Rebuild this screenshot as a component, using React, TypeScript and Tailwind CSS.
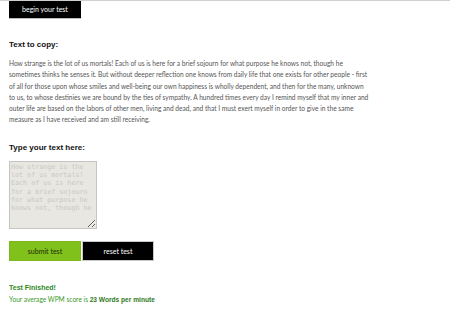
import { useState } from "react";

const LINES = [
  "How strange is the lot of us mortals! Each of us is here for a brief sojourn for what purpose he knows not, though he",
  "sometimes thinks he senses it. But without deeper reflection one knows from daily life that one exists for other people - first",
  "of all for those upon whose smiles and well-being our own happiness is wholly dependent, and then for the many, unknown",
  "to us, to whose destinies we are bound by the ties of sympathy. A hundred times every day I remind myself that my inner and",
  "outer life are based on the labors of other men, living and dead, and that I must exert myself in order to give in the same",
  "measure as I have received and am still receiving.",
];

export default function App() {
  const [typed, setTyped] = useState("");

  return (
    <div className="min-h-[330px] w-[450px] overflow-hidden border-t border-[#cfcfcf] bg-white font-['Lato',sans-serif]">
      <div className="px-[9px]">
        <button className="flex h-[18px] w-[72px] items-center justify-center border-b border-[#bbbbbb] bg-black text-[7px] text-white">
          begin your test
        </button>

        <h3 className="mt-[21px] font-['Liberation_Sans',Arial,sans-serif] text-[8px] font-bold leading-[10px] text-[#111]">
          Text to copy:
        </h3>

        <p className="mt-[8px] whitespace-nowrap text-[6.6px] leading-[11.3px] text-[#555]">
          {LINES.map((l, i) => (
            <span key={i} className="block">
              {l}
            </span>
          ))}
        </p>

        <h3 className="mt-[17px] font-['Liberation_Sans',Arial,sans-serif] text-[8px] font-bold leading-[10px] text-[#111]">
          Type your text here:
        </h3>

        <textarea
          value={typed}
          onChange={(e) => setTyped(e.target.value)}
          placeholder={LINES[0]}
          className="mt-[8px] block h-[68px] w-[88px] resize-y overflow-hidden border border-[#c4c4c4] bg-[#e8e7e1] px-[1px] py-[1px] font-['DejaVu_Sans_Mono',monospace] text-[6.7px] leading-[8.3px] text-[#555] placeholder:text-[#c9c9c2]"
        />

        <div className="mt-[12px] flex gap-[1px]">
          <button className="flex h-[20px] w-[72px] items-center justify-center border border-[#7cb81e] bg-[#80c11c] text-[7px] text-[#1d2a0a]">
            submit test
          </button>
          <button className="flex h-[20px] w-[72px] items-center justify-center border border-[#c8c8c8] bg-black text-[7px] text-white">
            reset test
          </button>
        </div>

        <div className="mt-[22px] font-['Liberation_Sans',Arial,sans-serif] text-[7px] font-bold leading-[10px] text-[#2f8a1e]">
          Test Finished!
        </div>
        <div className="mt-[1px] text-[6.6px] leading-[10px] text-[#3c9a2a]">
          Your average WPM score is{" "}
          <span className="font-['Liberation_Sans',Arial,sans-serif] font-bold text-[#2f7a1e]">
            23 Words per minute
          </span>
        </div>
      </div>
    </div>
  );
}
